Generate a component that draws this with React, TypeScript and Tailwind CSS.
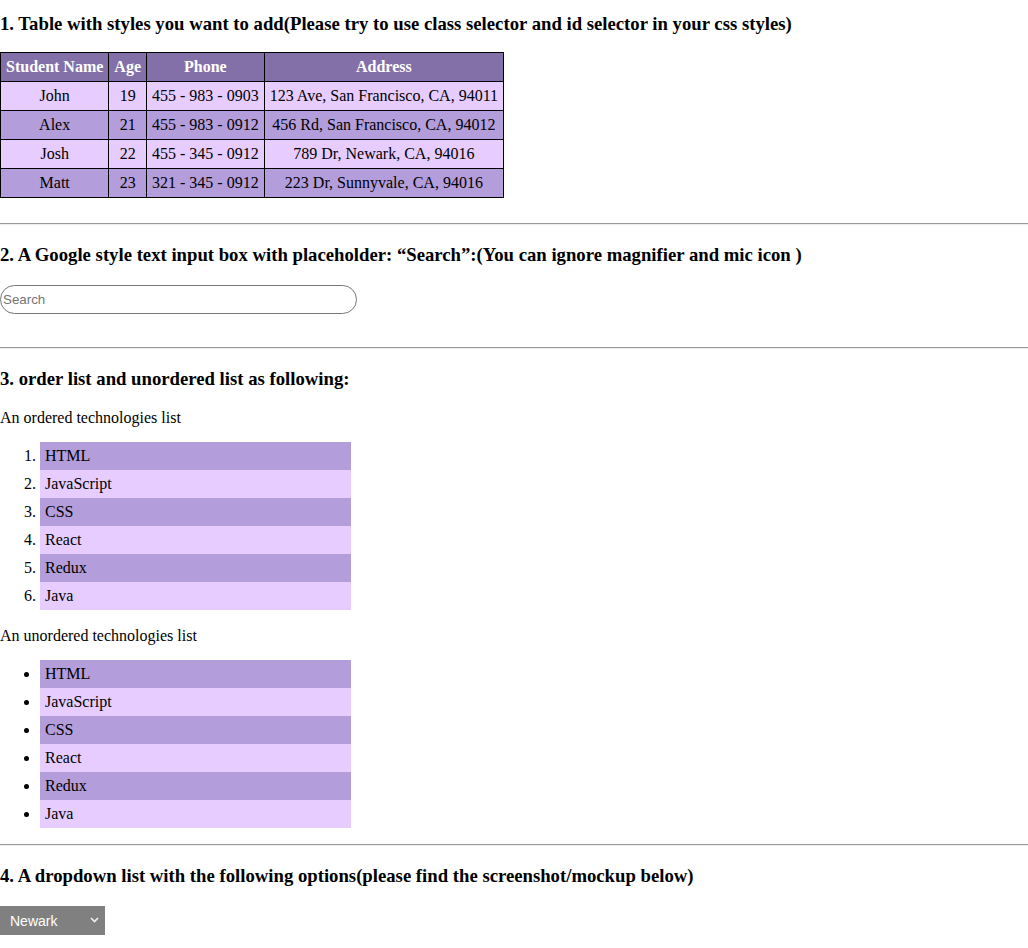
import React from 'react';

const students = [
  { name: 'John', age: 19, phone: '455 - 983 - 0903', address: '123 Ave, San Francisco, CA, 94011' },
  { name: 'Alex', age: 21, phone: '455 - 983 - 0912', address: '456 Rd, San Francisco, CA, 94012' },
  { name: 'Josh', age: 22, phone: '455 - 345 - 0912', address: '789 Dr, Newark, CA, 94016' },
  { name: 'Matt', age: 23, phone: '321 - 345 - 0912', address: '223 Dr, Sunnyvale, CA, 94016' },
];

const techs = ['HTML', 'JavaScript', 'CSS', 'React', 'Redux', 'Java'];

const Rule = () => (
  <hr className="h-0 border-0 border-t border-b border-t-[#9a9a9a] border-b-[#eeeeee]" />
);

const Heading = ({ children, className = '' }: { children: React.ReactNode; className?: string }) => (
  <h3 className={`text-[18.72px] leading-[21px] font-bold ${className}`}>{children}</h3>
);

export default function App() {
  return (
    <div className="min-h-[948px] bg-white text-black text-[16px] leading-[18px]" style={{ fontFamily: '"Liberation Serif", "Times New Roman", serif' }}>
      {/* 1. table */}
      <Heading className="pt-[13px] mb-[18px]">
        1. Table with styles you want to add(Please try to use class selector and id selector in your css styles)
      </Heading>
      <table className="border-collapse mb-[25px]">
        <thead>
          <tr className="bg-[#8470a9] text-white">
            <th className="border border-black px-[5px] py-[5px] font-bold">Student Name</th>
            <th className="border border-black px-[5px] py-[5px] font-bold">Age</th>
            <th className="border border-black px-[5px] py-[5px] font-bold">Phone</th>
            <th className="border border-black px-[5px] py-[5px] font-bold">Address</th>
          </tr>
        </thead>
        <tbody>
          {students.map((s, i) => (
            <tr key={s.name} className={i % 2 === 0 ? 'bg-[#e6ccff]' : 'bg-[#b39ddb]'}>
              <td className="border border-black px-[5px] py-[5px] text-center">{s.name}</td>
              <td className="border border-black px-[5px] py-[5px] text-center">{s.age}</td>
              <td className="border border-black px-[5px] py-[5px] text-center">{s.phone}</td>
              <td className="border border-black px-[5px] py-[5px] text-center">{s.address}</td>
            </tr>
          ))}
        </tbody>
      </table>

      <Rule />

      {/* 2. search */}
      <Heading className="mt-[19px] mb-[20px]">
        2. A Google style text input box with placeholder: “Search”:(You can ignore magnifier and mic icon )
      </Heading>
      <input
        type="text"
        placeholder="Search"
        className="block w-[357px] h-[29px] rounded-full border border-[#767676] px-[2px] text-[13.33px] placeholder:text-[#757575] outline-none mb-[33px]"
        style={{ fontFamily: '"Liberation Sans", Arial, sans-serif' }}
      />

      <Rule />

      {/* 3. lists */}
      <Heading className="mt-[19px] mb-[20px]">3. order list and unordered list as following:</Heading>
      <p className="mb-[15px]">An ordered technologies list</p>
      <ol className="list-decimal pl-[40px] mb-[17px]">
        {techs.map((t, i) => (
          <li key={t} className={`w-[311px] px-[5px] py-[5px] ${i % 2 === 0 ? 'bg-[#b39ddb]' : 'bg-[#e6ccff]'}`}>
            {t}
          </li>
        ))}
      </ol>
      <p className="mb-[15px]">An unordered technologies list</p>
      <ul className="list-disc pl-[40px] mb-[16px]">
        {techs.map((t, i) => (
          <li key={t} className={`w-[311px] px-[5px] py-[5px] ${i % 2 === 0 ? 'bg-[#b39ddb]' : 'bg-[#e6ccff]'}`}>
            {t}
          </li>
        ))}
      </ul>

      <Rule />

      {/* 4. dropdown */}
      <Heading className="mt-[19px] mb-[20px]">
        4. A dropdown list with the following options(please find the screenshot/mockup below)
      </Heading>
      <div className="relative w-[105px] h-[29px]">
        <select
          defaultValue="Newark"
          className="appearance-none w-full h-full bg-[#808080] text-white text-[14px] pl-[10px] outline-none"
          style={{ fontFamily: '"Liberation Sans", Arial, sans-serif' }}
        >
          <option>Newark</option>
          <option>San Francisco</option>
          <option>Sunnyvale</option>
        </select>
        <svg className="absolute right-[6px] top-[11px] pointer-events-none" width="9" height="6" viewBox="0 0 9 6">
          <path d="M1 1 L4.5 4.5 L8 1" fill="none" stroke="#f0f0f0" strokeWidth="1.6" />
        </svg>
      </div>
    </div>
  );
}
